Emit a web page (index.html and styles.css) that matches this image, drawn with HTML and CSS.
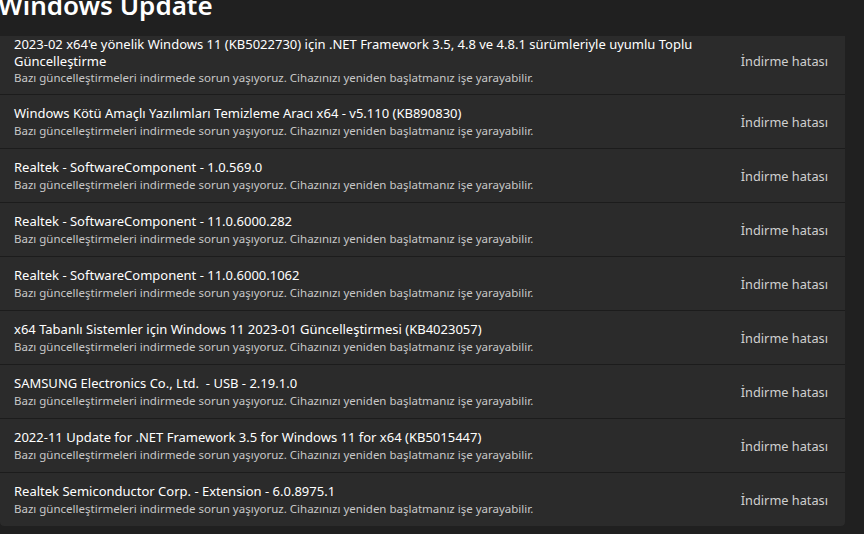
FILE: index.html
```html
<!DOCTYPE html>
<html lang="tr">
<head>
<meta charset="utf-8">
<link rel="stylesheet" href="styles.css">
</head>
<body>
<header class="top"><h1 class="title">Windows Update</h1></header>
<main class="list">
  <div class="row first">
    <div class="info">
      <div class="name">2023-02 x64'e yönelik Windows 11 (KB5022730) için .NET Framework 3.5, 4.8 ve 4.8.1 sürümleriyle uyumlu Toplu Güncelleştirme</div>
      <div class="desc">Bazı güncelleştirmeleri indirmede sorun yaşıyoruz. Cihazınızı yeniden başlatmanız işe yarayabilir.</div>
    </div>
    <div class="status">İndirme hatası</div>
  </div>
  <div class="row">
    <div class="info">
      <div class="name">Windows Kötü Amaçlı Yazılımları Temizleme Aracı x64 - v5.110 (KB890830)</div>
      <div class="desc">Bazı güncelleştirmeleri indirmede sorun yaşıyoruz. Cihazınızı yeniden başlatmanız işe yarayabilir.</div>
    </div>
    <div class="status">İndirme hatası</div>
  </div>
  <div class="row">
    <div class="info">
      <div class="name">Realtek - SoftwareComponent - 1.0.569.0</div>
      <div class="desc">Bazı güncelleştirmeleri indirmede sorun yaşıyoruz. Cihazınızı yeniden başlatmanız işe yarayabilir.</div>
    </div>
    <div class="status">İndirme hatası</div>
  </div>
  <div class="row">
    <div class="info">
      <div class="name">Realtek - SoftwareComponent - 11.0.6000.282</div>
      <div class="desc">Bazı güncelleştirmeleri indirmede sorun yaşıyoruz. Cihazınızı yeniden başlatmanız işe yarayabilir.</div>
    </div>
    <div class="status">İndirme hatası</div>
  </div>
  <div class="row">
    <div class="info">
      <div class="name">Realtek - SoftwareComponent - 11.0.6000.1062</div>
      <div class="desc">Bazı güncelleştirmeleri indirmede sorun yaşıyoruz. Cihazınızı yeniden başlatmanız işe yarayabilir.</div>
    </div>
    <div class="status">İndirme hatası</div>
  </div>
  <div class="row">
    <div class="info">
      <div class="name">x64 Tabanlı Sistemler için Windows 11 2023-01 Güncelleştirmesi (KB4023057)</div>
      <div class="desc">Bazı güncelleştirmeleri indirmede sorun yaşıyoruz. Cihazınızı yeniden başlatmanız işe yarayabilir.</div>
    </div>
    <div class="status">İndirme hatası</div>
  </div>
  <div class="row">
    <div class="info">
      <div class="name">SAMSUNG Electronics Co., Ltd.&nbsp; - USB - 2.19.1.0</div>
      <div class="desc">Bazı güncelleştirmeleri indirmede sorun yaşıyoruz. Cihazınızı yeniden başlatmanız işe yarayabilir.</div>
    </div>
    <div class="status">İndirme hatası</div>
  </div>
  <div class="row">
    <div class="info">
      <div class="name">2022-11 Update for .NET Framework 3.5 for Windows 11 for x64 (KB5015447)</div>
      <div class="desc">Bazı güncelleştirmeleri indirmede sorun yaşıyoruz. Cihazınızı yeniden başlatmanız işe yarayabilir.</div>
    </div>
    <div class="status">İndirme hatası</div>
  </div>
  <div class="row last">
    <div class="info">
      <div class="name">Realtek Semiconductor Corp. - Extension - 6.0.8975.1</div>
      <div class="desc">Bazı güncelleştirmeleri indirmede sorun yaşıyoruz. Cihazınızı yeniden başlatmanız işe yarayabilir.</div>
    </div>
    <div class="status">İndirme hatası</div>
  </div>
</main>
</body>
</html>
```
FILE: styles.css
```css
* {
  box-sizing: border-box;
}
html, body {
  margin: 0;
  padding: 0;
  background: #202020;
  overflow: hidden;
  height: 534px;
}
body {
  font-family: "Noto Sans", "Open Sans", sans-serif;
  color: #ffffff;
}
.top {
  height: 36px;
  overflow: hidden;
  background: #202020;
}
.title {
  margin: -12px 0 0 -2px;
  font-size: 26px;
  line-height: 34px;
  font-weight: 600;
  color: #ffffff;
}
.list {
  display: flex;
  flex-direction: column;
  gap: 1px;
  margin-right: 19px;
  background: #1c1c1c;
  border-radius: 0 0 4px 4px;
}
.row {
  display: flex;
  align-items: center;
  height: 53px;
  padding: 0 17px 0 14px;
  background: #2b2b2b;
}
.row.first {
  height: 58px;
  padding-bottom: 9px;
}
.row.last {
  border-radius: 0 0 4px 4px;
}
.info {
  flex: 1;
  min-width: 0;
  padding-right: 40px;
}
.name {
  font-size: 13px;
  line-height: 17px;
  color: #ffffff;
}
.desc {
  margin-top: 1px;
  font-size: 11.5px;
  line-height: 16px;
  color: #c8c8c8;
}
.first .desc {
  margin-top: 0;
}
.status {
  font-size: 12.75px;
  color: #d0d0d0;
  white-space: nowrap;
}
```
